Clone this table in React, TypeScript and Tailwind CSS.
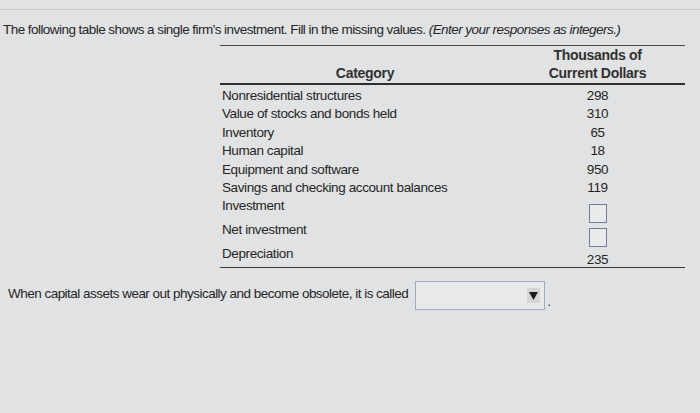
const rows = [
  { label: 'Nonresidential structures', value: '298' },
  { label: 'Value of stocks and bonds held', value: '310' },
  { label: 'Inventory', value: '65' },
  { label: 'Human capital', value: '18' },
  { label: 'Equipment and software', value: '950' },
  { label: 'Savings and checking account balances', value: '119' },
]

const InputBox = () => (
  <input
    type="text"
    title="answer"
    className="w-[18px] h-[19px] border border-[#6f7d99] bg-[#e9eaec] outline-none"
  />
)

const App = () => {
  return (
    <div
      className="w-[700px] h-[413px] bg-[#e1e2e3] text-[#262626] overflow-hidden"
      style={{ fontFamily: '"Liberation Sans", Arial, sans-serif' }}
    >
      <div className="pt-[9px]">
        <div className="h-px bg-[#c9cacb] w-full" />
      </div>
      <p className="mt-[11px] pl-[3px] text-[13.5px] leading-[18px] tracking-[-0.55px] whitespace-nowrap">
        The following table shows a single firm's investment. Fill in the missing values.{' '}
        <i>(Enter your responses as integers.)</i>
      </p>

      <div className="ml-[220px] w-[465px] mt-[6px] text-[13.5px] tracking-[-0.4px]">
        <div className="h-px bg-[#4a4a4a]" />
        <div className="flex items-end font-bold text-[#303030] leading-[18px] pb-px text-[14px] tracking-[-0.3px]">
          <div className="w-[290px] text-center">Category</div>
          <div className="w-[175px] text-center">
            Thousands of
            <br />
            Current Dollars
          </div>
        </div>
        <div className="h-[2px] bg-[#2e2e2e]" />

        <div className="pt-[2px]">
          {rows.map((r) => (
            <div key={r.label} className="flex h-[18.4px] leading-[18.4px]">
              <div className="w-[290px] pl-[2px]">{r.label}</div>
              <div className="w-[175px] text-center">{r.value}</div>
            </div>
          ))}
          <div className="flex h-[24px] leading-[18px]">
            <div className="w-[290px] pl-[2px]">Investment</div>
            <div className="w-[175px] flex justify-center pt-[7px]">
              <InputBox />
            </div>
          </div>
          <div className="flex h-[24px] leading-[18px]">
            <div className="w-[290px] pl-[2px]">Net investment</div>
            <div className="w-[175px] flex justify-center pt-[7px]">
              <InputBox />
            </div>
          </div>
          <div className="flex h-[22px] leading-[18px]">
            <div className="w-[290px] pl-[2px]">Depreciation</div>
            <div className="w-[175px] text-center pt-[6px]">235</div>
          </div>
        </div>
        <div className="h-px bg-[#3a3a3a]" />
      </div>

      <div className="flex items-start mt-[13px] pl-[8px] text-[13.5px] tracking-[-0.52px]">
        <span className="whitespace-nowrap mt-[3px]">
          When capital assets wear out physically and become obsolete, it is called
        </span>
        <div className="ml-[7px] w-[130px] h-[29px] border border-[#9dabc3] bg-[#e8e9eb] flex items-center justify-end pr-[4px]">
          <div className="w-[13px] h-[15px] bg-[#d4d5d7] flex items-center justify-center">
            <svg width="9" height="8" viewBox="0 0 9 8">
              <path d="M0 0 H9 L4.5 8 Z" fill="#1a1a1a" />
            </svg>
          </div>
        </div>
        <span className="ml-[2px] mt-[11px]">.</span>
      </div>
    </div>
  )
}

export default App
